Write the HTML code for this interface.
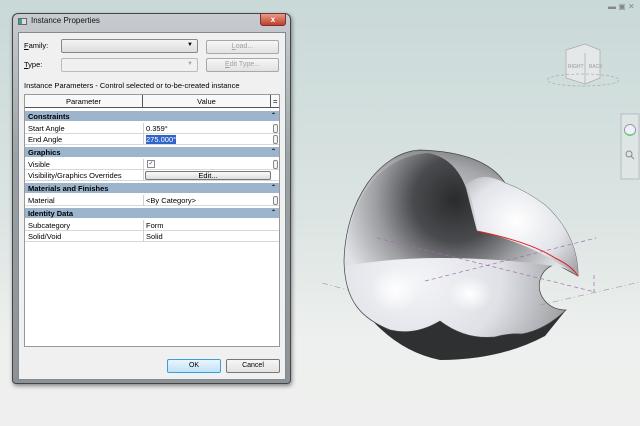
<!DOCTYPE html>
<html><head><style>
*{margin:0;padding:0;box-sizing:border-box}
body{width:640px;height:426px;overflow:hidden;position:relative;font-family:"Liberation Sans",sans-serif;font-size:8px;color:#000;background:linear-gradient(#c9d9d8 0%,#dbe4e2 50%,#eef0ef 80%,#eeefee 100%)}
.a{position:absolute}
.dlg{left:12px;top:13px;width:279px;height:371px;border:1px solid #444;border-radius:6px 6px 4px 4px;background:linear-gradient(#c8ccd0,#9aa0a4 40%,#8c9296);box-shadow:1px 2px 4px rgba(0,0,0,.45)}
.in{left:5px;top:18px;width:268px;height:348px;background:#f0f0f0;border:1px solid #808a90}
.btn{border:1px solid #a8a8a8;border-radius:2px;background:linear-gradient(#f6f6f6,#e2e2e2);color:#a0a0a0;text-align:center;line-height:12px;font-size:7px}
.row{position:absolute;left:0;width:254px;height:11px;line-height:11px;font-size:7.5px;border-bottom:1px solid #d8d8d8}
.cat{background:#9cb4cc;font-weight:bold;border-bottom:1px solid #fff}
.c1{position:absolute;left:3px}
.c2{position:absolute;left:121px}
.sep{position:absolute;left:118px;top:0;width:1px;height:11px;background:#d0d0d0}
.sb{position:absolute;left:248px;top:1px;width:5px;height:9px;border:1px solid #888;border-radius:2px;background:#f4f4f4}
</style></head><body>

<svg class="a" style="left:0;top:0" width="640" height="426">
<defs>
<radialGradient id="g1" cx="0.3" cy="0.7" r="0.75"><stop offset="0" stop-color="#f4f5f8"/><stop offset="0.5" stop-color="#dfe1e7"/><stop offset="0.85" stop-color="#a4a6aa"/><stop offset="1" stop-color="#77797c"/></radialGradient>
<radialGradient id="g2" gradientUnits="userSpaceOnUse" cx="455" cy="200" r="120"><stop offset="0" stop-color="#2a2b2d"/><stop offset="0.35" stop-color="#4a4b4e"/><stop offset="0.65" stop-color="#9a9ca0"/><stop offset="1" stop-color="#e0e2e6"/></radialGradient>
<radialGradient id="g3" cx="0.45" cy="0.45" r="0.7"><stop offset="0" stop-color="#fff"/><stop offset="0.6" stop-color="#e2e4ea"/><stop offset="1" stop-color="#a8aab0"/></radialGradient>
<radialGradient id="hl" cx="0.5" cy="0.5" r="0.5"><stop offset="0" stop-color="#fff"/><stop offset="1" stop-color="#fff" stop-opacity="0"/></radialGradient>
</defs>
<path d="M370 318 Q400 352 440 360 Q500 360 545 336 L566 310 L380 300Z" fill="#2f3032"/>
<path d="M420 150 C380 152 345 200 344 262 C345 300 360 318 390 330 Q415 336 440 321 Q465 340 495 337 Q510 333 522 334 Q545 330 566 310 C548 310 536 295 540 280 Q543 268 556 264 L578 276 Q578 235 545 205 Q525 190 505 183 Q485 152 420 150Z" fill="url(#g1)" stroke="#444" stroke-width="0.7"/>
<path d="M478 232 Q473 200 466 185 Q482 170 505 183 Q525 190 545 205 Q578 235 578 276 Q530 242 478 232Z" fill="url(#g3)"/>
<path d="M428 153 Q455 158 466 188 Q472 212 477 231 Q530 242 578 276 Q565 266 553 266 Q500 258 440 258 Q390 258 345 266 C346 200 380 156 428 153Z" fill="url(#g2)"/>
<path d="M477 231 Q530 242 555 258 Q572 266 578 276" stroke="#d22" stroke-width="1" fill="none"/>
<ellipse cx="395" cy="290" rx="24" ry="22" fill="url(#hl)"/>
<ellipse cx="470" cy="294" rx="22" ry="18" fill="url(#hl)"/>
<g stroke="#a070a8" stroke-width="0.7" stroke-dasharray="4 3" fill="none">
<line x1="377" y1="238" x2="595" y2="292"/><line x1="425" y1="281" x2="596" y2="238"/><line x1="594" y1="275" x2="594" y2="292"/>
</g>
<g stroke="#999" stroke-width="0.6" stroke-dasharray="6 3 1 3" fill="none">
<line x1="322" y1="283" x2="348" y2="290"/><line x1="540" y1="305" x2="640" y2="282"/>
</g>
<g stroke="#aaa" stroke-width="0.7" fill="#e4e8e8">
<path d="M566 50 L585 44 L600 50 L600 78 L585 84 L566 78Z"/><line x1="585" y1="53" x2="585" y2="84"/>
<ellipse cx="583" cy="80" rx="36" ry="6" fill="none" stroke-dasharray="3 2"/>
</g>
<text x="568" y="68" font-size="5" fill="#999" font-family="Liberation Sans">RIGHT</text>
<text x="589" y="68" font-size="5" fill="#999" font-family="Liberation Sans">BACK</text>
<text x="608" y="9" font-size="8" fill="#888" font-family="Liberation Sans">▬ ▣ ✕</text>
<rect x="621" y="114" width="18" height="65" fill="#dde6e5" stroke="#aab" stroke-width="0.7"/>
<circle cx="630" cy="130" r="5.5" fill="#eef" stroke="#888" stroke-width="0.8"/>
<path d="M625 133 Q630 137 635 133" stroke="#6c6" stroke-width="1.2" fill="none"/>
<circle cx="629" cy="154" r="3" fill="none" stroke="#888"/><line x1="631" y1="156" x2="634" y2="159" stroke="#888"/>
</svg>

<div class="a dlg">
 <div class="a" style="left:5px;top:4px;width:9px;height:7px;background:linear-gradient(90deg,#3a7 0 40%,#ddd 40%);border:1px solid #667"></div>
 <div class="a" style="left:18px;top:2px;font-size:8px;color:#111">Instance Properties</div>
 <div class="a" style="left:247px;top:-1px;width:26px;height:13px;border-radius:0 0 3px 3px;background:linear-gradient(#e89a88,#c0402a);border:1px solid #733;color:#fff;font-weight:bold;font-size:8px;text-align:center;line-height:11px">x</div>
 <div class="a in">
  <div class="a" style="left:5px;top:8px;font-size:7.5px"><u>F</u>amily:</div>
  <div class="a" style="left:42px;top:6px;width:137px;height:14px;border:1px solid #888;border-radius:2px;background:linear-gradient(#f4f4f4,#dcdcdc)"><span class="a" style="right:4px;top:2px;font-size:6px">▼</span></div>
  <div class="a btn" style="left:187px;top:7px;width:73px;height:14px"><u>L</u>oad...</div>
  <div class="a" style="left:5px;top:27px;font-size:7.5px"><u>T</u>ype:</div>
  <div class="a" style="left:42px;top:25px;width:137px;height:14px;border:1px solid #bbb;border-radius:2px;background:#f0f0f0"><span class="a" style="right:4px;top:2px;font-size:6px;color:#aaa">▼</span></div>
  <div class="a btn" style="left:187px;top:25px;width:73px;height:14px"><u>E</u>dit Type...</div>
  <div class="a" style="left:5px;top:48px;font-size:7.5px">Instance Parameters - Control selected or to-be-created instance</div>
  <div class="a" style="left:5px;top:61px;width:256px;height:253px;border:1px solid #999;background:#fff">
   <div class="a" style="left:0;top:0;width:254px;height:13px;border-bottom:1px solid #555;background:#f8f8f8;font-size:7.5px;line-height:13px">
    <span class="a" style="left:0;width:117px;text-align:center">Parameter</span>
    <span class="a" style="left:117px;top:0;width:1px;height:13px;background:#555"></span>
    <span class="a" style="left:118px;width:127px;text-align:center">Value</span>
    <span class="a" style="left:245px;top:0;width:1px;height:13px;background:#555"></span>
    <span class="a" style="left:248px">=</span>
   </div>
   <div class="row cat" style="top:16px"><span class="c1">Constraints</span><span class="a" style="right:3px;font-size:6px">⌃</span></div>
   <div class="row" style="top:28px"><span class="c1">Start Angle</span><span class="sep"></span><span class="c2">0.359°</span><span class="sb"></span></div>
   <div class="row" style="top:39px"><span class="c1">End Angle</span><span class="sep"></span><span class="c2" style="background:#3064c8;color:#fff;top:1px;line-height:9px">275.000°</span><span class="sb"></span></div>
   <div class="row cat" style="top:52px"><span class="c1">Graphics</span><span class="a" style="right:3px;font-size:6px">⌃</span></div>
   <div class="row" style="top:64px"><span class="c1">Visible</span><span class="sep"></span><span class="a" style="left:122px;top:1px;width:8px;height:8px;border:1px solid #889;font-size:6px;line-height:7px;color:#335;text-align:center">✓</span><span class="sb"></span></div>
   <div class="row" style="top:75px"><span class="c1">Visibility/Graphics Overrides</span><span class="sep"></span><span class="a" style="left:120px;top:1px;width:126px;height:9px;border:1px solid #777;border-radius:2px;background:linear-gradient(#fafafa,#ddd);text-align:center;line-height:8px">Edit...</span></div>
   <div class="row cat" style="top:88px"><span class="c1">Materials and Finishes</span><span class="a" style="right:3px;font-size:6px">⌃</span></div>
   <div class="row" style="top:100px"><span class="c1">Material</span><span class="sep"></span><span class="c2">&lt;By Category&gt;</span><span class="sb"></span></div>
   <div class="row cat" style="top:113px"><span class="c1">Identity Data</span><span class="a" style="right:3px;font-size:6px">⌃</span></div>
   <div class="row" style="top:125px"><span class="c1">Subcategory</span><span class="sep"></span><span class="c2">Form</span></div>
   <div class="row" style="top:136px"><span class="c1">Solid/Void</span><span class="sep"></span><span class="c2">Solid</span></div>
  </div>
  <div class="a btn" style="left:148px;top:326px;width:54px;height:14px;border-color:#3c9ed8;background:linear-gradient(#eaf6fd,#bfe2f6);color:#000">OK</div>
  <div class="a btn" style="left:207px;top:326px;width:54px;height:14px;border-color:#777;color:#000">Cancel</div>
 </div>
</div>
</body></html>
